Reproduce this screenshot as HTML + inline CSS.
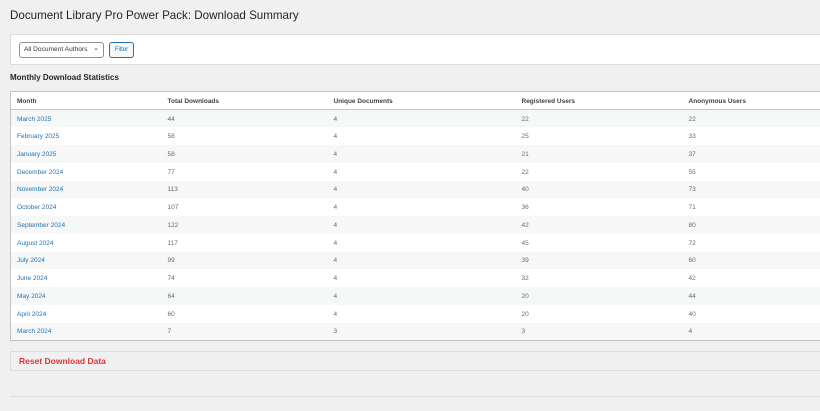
<!DOCTYPE html>
<html><head><style>
*{box-sizing:border-box}
body{margin:0;width:820px;height:411px;overflow:hidden;background:#f0f0f1;font-family:"Liberation Sans",sans-serif;color:#3c434a;position:relative}
h1{position:absolute;left:10px;top:9px;margin:0;font-size:11.6px;font-weight:400;color:#1d2327}
.fbox{position:absolute;left:10px;top:34px;width:830px;height:31px;background:#fff;border:1px solid #dcdcde}
.sel{position:absolute;left:8px;top:7px;width:85px;height:16px;border:1px solid #8c8f94;border-radius:3px;font-size:6.6px;line-height:14px;padding-left:4px;color:#2c3338}
.btn{position:absolute;left:98px;top:7px;width:25px;height:16px;border:1px solid #2271b1;border-radius:3px;background:#f6f7f7;color:#2271b1;font-size:6px;line-height:14px;text-align:center}
h2{position:absolute;left:10px;top:73px;margin:0;font-size:8px;font-weight:700;color:#1d2327}
table{position:absolute;left:10px;top:91px;width:840px;border-collapse:collapse;background:#fff;border:1px solid #c3c4c7;font-size:6.5px}
th{text-align:left;font-weight:700;height:18px;padding:1px 0 0 6px;border-bottom:1px solid #c3c4c7;color:#3c434a}
td{height:17.75px;padding:1px 0 0 6px;color:#646970}
tr:nth-child(odd) td{background:#f6f7f7}
td a{color:#2271b1}
.reset{position:absolute;left:10px;top:351px;width:830px;height:20px;border:1px solid #dcdcde;background:#f0f0f1}
.reset span{position:absolute;left:8px;top:4px;color:#d63638;font-size:8.5px;font-weight:700}
.line{position:absolute;left:10px;top:396px;width:810px;height:1px;background:#dcdcde}
</style></head><body>
<h1>Document Library Pro Power Pack: Download Summary</h1>
<div class="fbox"><div class="sel">All Document Authors <span style="position:absolute;right:4px;top:-1px;font-size:7px">&#8964;</span></div><div class="btn">Filter</div></div>
<h2>Monthly Download Statistics</h2>
<table>
<thead><tr><th style="width:151px">Month</th><th style="width:166px">Total Downloads</th><th style="width:188px">Unique Documents</th><th style="width:167px">Registered Users</th><th>Anonymous Users</th></tr></thead>
<tbody>
<tr><td><a>March 2025</a></td><td>44</td><td>4</td><td>22</td><td>22</td></tr>
<tr><td><a>February 2025</a></td><td>58</td><td>4</td><td>25</td><td>33</td></tr>
<tr><td><a>January 2025</a></td><td>58</td><td>4</td><td>21</td><td>37</td></tr>
<tr><td><a>December 2024</a></td><td>77</td><td>4</td><td>22</td><td>55</td></tr>
<tr><td><a>November 2024</a></td><td>113</td><td>4</td><td>40</td><td>73</td></tr>
<tr><td><a>October 2024</a></td><td>107</td><td>4</td><td>36</td><td>71</td></tr>
<tr><td><a>September 2024</a></td><td>122</td><td>4</td><td>42</td><td>80</td></tr>
<tr><td><a>August 2024</a></td><td>117</td><td>4</td><td>45</td><td>72</td></tr>
<tr><td><a>July 2024</a></td><td>99</td><td>4</td><td>39</td><td>60</td></tr>
<tr><td><a>June 2024</a></td><td>74</td><td>4</td><td>32</td><td>42</td></tr>
<tr><td><a>May 2024</a></td><td>64</td><td>4</td><td>20</td><td>44</td></tr>
<tr><td><a>April 2024</a></td><td>60</td><td>4</td><td>20</td><td>40</td></tr>
<tr><td><a>March 2024</a></td><td>7</td><td>3</td><td>3</td><td>4</td></tr>
</tbody></table>
<div class="reset"><span>Reset Download Data</span></div>
<div class="line"></div>
</body></html>
